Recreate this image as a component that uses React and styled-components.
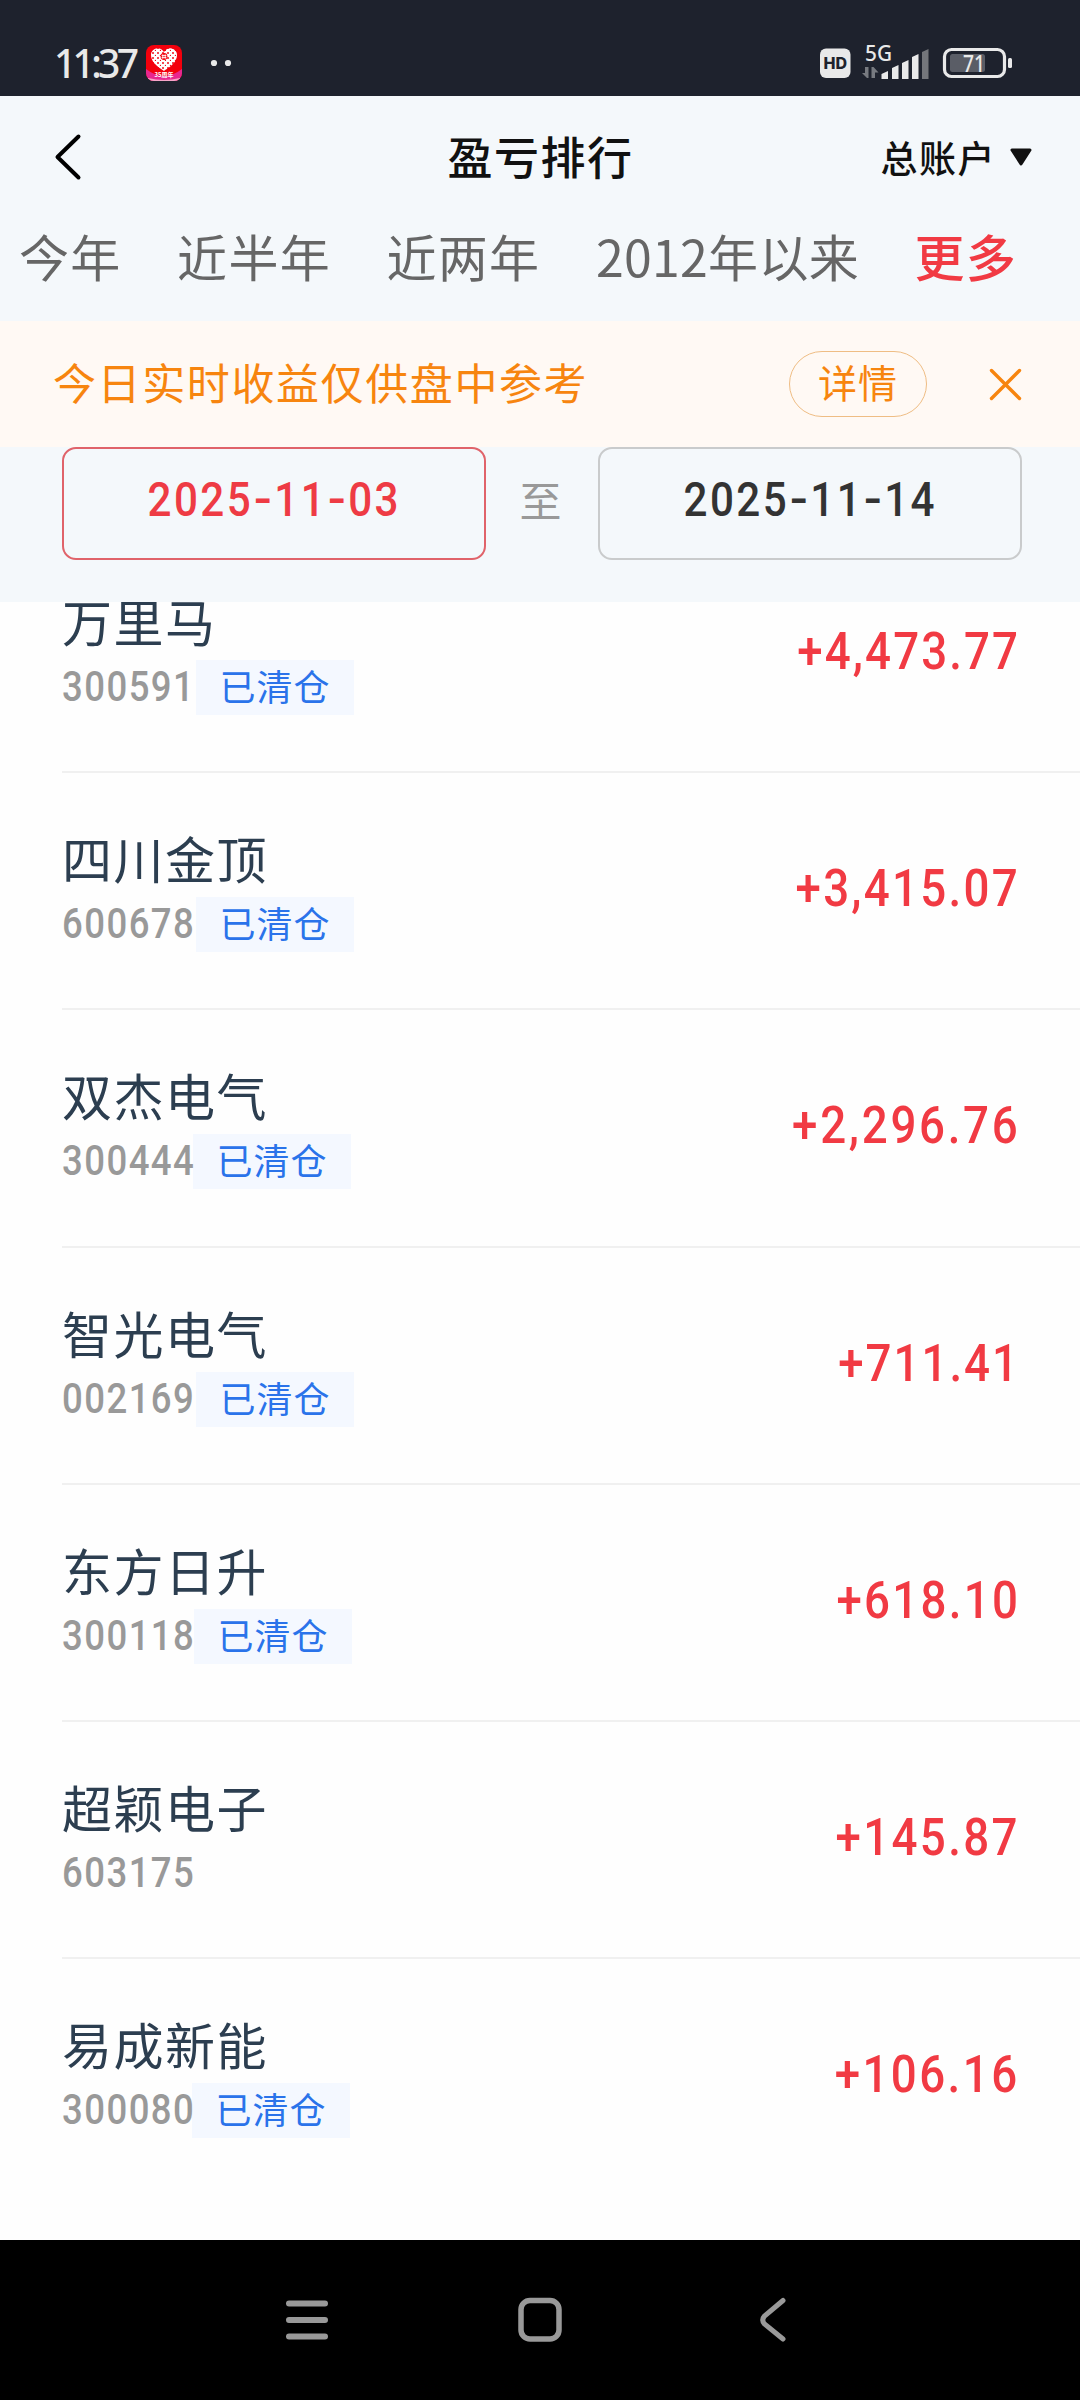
import React from 'react';
import styled, { createGlobalStyle } from 'styled-components';

const GlobalStyle = createGlobalStyle`
  * {
    box-sizing: border-box;
  }
  body {
    margin: 0;
    background-color: #fefefe;
    font-family: 'Noto Sans CJK SC', sans-serif;
  }
`;

const StyledWrapper = styled.div`
  width: 1080px;
  height: 2400px;
  display: flex;
  flex-direction: column;
  overflow: hidden;
  white-space: nowrap;
`;

const StatusBar = styled.div`
  height: 96px;
  flex: none;
  display: flex;
  align-items: flex-start;
  padding: 41px 67px 0 54px;
  background-color: #1e222d;
`;

const Clock = styled.span`
  width: 92px;
  height: 44px;
  font-family: 'Noto Sans', sans-serif;
  font-size: 39px;
  font-weight: 500;
  line-height: 43px;
  letter-spacing: -3.7px;
  color: #e9e9e9;
`;

const StatusIcons = styled.div`
  margin-left: auto;
  height: 44px;
  svg {
    overflow: visible;
  }
`;

const Header = styled.header`
  height: 122px;
  flex: none;
  display: grid;
  grid-template-columns: 1fr auto 1fr;
  align-items: center;
  padding: 0 48px 0 53px;
  background-color: #f4f8fb;
`;

const Title = styled.h1`
  margin: 0 4px 3px 0;
  font-size: 45px;
  font-weight: 500;
  line-height: 60px;
  letter-spacing: 1.5px;
  color: #111;
`;

const AccountPicker = styled.div`
  display: flex;
  align-items: center;
  justify-content: flex-end;
  gap: 14px;
  padding-bottom: 1px;
  font-size: 37px;
  font-weight: 500;
  line-height: 50px;
  letter-spacing: 1.5px;
  color: #111;
`;

const Tabs = styled.nav`
  height: 103px;
  flex: none;
  display: flex;
  gap: 55.5px;
  padding-left: 19px;
  background-color: #f4f8fb;
`;

const Tab = styled.span`
  font-size: 50px;
  line-height: 75px;
  letter-spacing: ${({ $wide }) => ($wide ? '0.3px' : '1.3px')};
  font-weight: ${({ $active }) => ($active ? 500 : 400)};
  color: ${({ $active }) => ($active ? '#f13a43' : '#666')};
`;

const Notice = styled.div`
  height: 126px;
  flex: none;
  display: flex;
  align-items: center;
  padding: 0 58px 0 53px;
  background-color: #fff9f4;
  color: #f7850f;
`;

const NoticeText = styled.span`
  flex: 1;
  padding-bottom: 6px;
  font-size: 43px;
  line-height: 60px;
  letter-spacing: 1.6px;
`;

const DetailButton = styled.div`
  width: 138px;
  height: 66px;
  margin-right: 62px;
  border: 1.5px solid #efbd84;
  border-radius: 33px;
  text-align: center;
  font-size: 39px;
  line-height: 59px;
  letter-spacing: 1px;
`;

const DateRange = styled.div`
  height: 155px;
  flex: none;
  display: flex;
  align-items: flex-start;
  padding: 0 58px 0 62px;
  background-color: #f4f8fb;
`;

const DateBox = styled.div`
  width: 424px;
  height: 113px;
  display: flex;
  justify-content: center;
  border: 2px solid ${({ $active }) => ($active ? '#e0636a' : '#c9cbcc')};
  border-radius: 14px;
  color: ${({ $active }) => ($active ? '#ee3b44' : '#333')};
`;

const Figures = styled.span`
  font-family: Roboto, sans-serif;
  font-weight: 500;
  font-size: 49px;
  line-height: 99px;
  letter-spacing: 2.8px;
  transform: scaleX(0.86);
`;

const Dash = styled.span`
  font-family: Inter, sans-serif;
  letter-spacing: 2px;
`;

const RangeLabel = styled.span`
  flex: 1;
  padding-right: 3px;
  text-align: center;
  font-size: 42px;
  line-height: 104px;
  color: #999;
`;

const List = styled.main`
  flex: 1;
  min-height: 0;
  display: flex;
  flex-direction: column;
  overflow: hidden;
  background-color: #fefefe;
`;

// the first row is scrolled partly under the date range
const Row = styled.div`
  height: 237.2px;
  flex: none;
  display: flex;
  justify-content: space-between;
  margin-left: 62px;
  padding-right: 60px;
  border-bottom: ${({ $last }) => ($last ? 'none' : '2px solid #f0f0f0')};
  &:first-child {
    margin-top: -66px;
  }
`;

const Stock = styled.div`
  display: flex;
  flex-direction: column;
  padding-top: 48px;
`;

const StockName = styled.span`
  height: 76px;
  font-size: 50px;
  line-height: 72px;
  letter-spacing: 1.5px;
  color: #2c3e50;
`;

const StockMeta = styled.div`
  height: 55px;
  display: flex;
`;

const Code = styled.span`
  width: ${({ $width }) => $width}px;
  font-family: Roboto, sans-serif;
  font-size: 43px;
  font-weight: 500;
  line-height: 53px;
  letter-spacing: 1.7px;
  color: #999;
  transform: scaleX(0.85);
  transform-origin: left;
`;

const Tag = styled.span`
  width: 158px;
  height: 55px;
  background-color: #f4f8ff;
  color: #2a73ea;
  font-size: 36px;
  line-height: 51px;
  letter-spacing: 1px;
  text-align: center;
`;

const Amount = styled.span`
  font-family: Roboto, sans-serif;
  font-weight: 500;
  font-size: 52.5px;
  line-height: 231px;
  letter-spacing: ${({ $tracking }) => $tracking}px;
  color: #f13a43;
  transform: scaleX(0.87);
  transform-origin: right;
`;

const NavBar = styled.footer`
  height: 160px;
  flex: none;
  display: flex;
  align-items: center;
  justify-content: space-between;
  padding: 0 292px 0 285px;
  background-color: #000;
`;

const HomeButton = styled.div`
  height: 46px;
  margin-right: 9px;
`;

const AppIcon = () => (
  <svg width="36" height="44" viewBox="0 0 36 44">
    <defs>
      <clipPath id="badge">
        <rect y="4" width="36" height="36" rx="8" />
      </clipPath>
      <pattern id="speckle" width="5" height="5" patternUnits="userSpaceOnUse">
        <rect width="5" height="5" fill="#fff" />
        <circle cx="2" cy="2" r="1" fill="#f0101c" />
        <circle cx="4.5" cy="4.5" r="0.7" fill="#f0101c" />
      </pattern>
    </defs>
    <g clipPath="url(#badge)">
      <rect y="4" width="36" height="36" fill="#f3000c" />
      <path d="M0 28Q18 42 36 28V40H0Z" fill="#e8278f" />
      <path d="M2 37Q18 41 34 37L36 40H0Z" fill="#f6a5c8" />
      <path
        d="M18 30C10 25 5 20 5 14C5 8 13 4 18 11C23 4 31 8 31 14C31 20 26 25 18 30Z"
        fill="url(#speckle)"
      />
      <circle cx="18" cy="15.5" r="3.4" fill="#f3000c" />
      <path d="M16.8 13.4V17.8M19.2 13.4V17.8M15.6 14.6H20.4M15.6 16.6H20.4" stroke="#fff" strokeWidth="0.9" />
    </g>
    <text x="18" y="36" fontSize="6" fontWeight="700" fill="#fff" textAnchor="middle">
      35周年
    </text>
  </svg>
);

const MoreDots = () => (
  <svg width="60" height="44" viewBox="0 0 60 44">
    <circle cx="32" cy="22" r="3.1" fill="#e9e9e9" />
    <circle cx="46" cy="22" r="3.1" fill="#e9e9e9" />
  </svg>
);

const Indicators = () => (
  <svg width="193" height="44" viewBox="820 41 193 44" fill="#e9e9e9">
    <rect x="820" y="48.5" width="30.5" height="29.5" rx="6" />
    <text x="835.2" y="69" fontFamily="Inter" fontSize="16" fontWeight="800" fill="#1e222d" textAnchor="middle">
      HD
    </text>
    <text x="865" y="61" fontFamily="Noto Sans" fontSize="21" fontWeight="500" textLength="27" lengthAdjust="spacingAndGlyphs">
      5G
    </text>
    <path d="M862 73H865V67H868.5V78H867ZM871.5 67H873.5L878.5 72.5H875V78H871.5Z" fill="#777a80" />
    <path d="M881.5 79V74L888 71V79ZM892 79V68L898.5 65V79ZM902 79V63L908.5 60V79ZM912 79V57L918.5 54V79Z" />
    <path d="M922 79V52L928.5 49V79Z" fill="#74767b" />
    <rect x="944.5" y="49.5" width="60" height="27" rx="7" fill="none" stroke="#e9e9e9" strokeWidth="3.2" />
    <rect x="950" y="54" width="35" height="18" rx="2.5" fill="#5a5d66" />
    <rect x="1008" y="58" width="4" height="10" rx="1.5" />
    <text x="963" y="72" fontFamily="Noto Sans" fontSize="24" fontWeight="500" textLength="22" lengthAdjust="spacingAndGlyphs">
      71
    </text>
  </svg>
);

const BackIcon = () => (
  <svg width="30" height="48" viewBox="0 0 30 48" fill="none">
    <path d="M25.5 3.5L4.5 24L25.5 44.5" stroke="#000" strokeWidth="4" strokeLinecap="round" strokeLinejoin="round" />
  </svg>
);

const CaretIcon = () => (
  <svg width="22" height="18" viewBox="0 0 22 18">
    <path d="M2 2H20L11 16Z" fill="#111" stroke="#111" strokeWidth="3" strokeLinejoin="round" />
  </svg>
);

const CloseIcon = () => (
  <svg width="33" height="33" viewBox="0 0 33 33">
    <path d="M2.5 2.5L30.5 30.5M30.5 2.5L2.5 30.5" stroke="#f7850f" strokeWidth="3.4" strokeLinecap="round" />
  </svg>
);

const MenuIcon = () => (
  <svg width="44" height="46" viewBox="0 0 44 46">
    <path d="M4 6.5H40M4 23H40M4 39.5H40" stroke="#999" strokeWidth="6" strokeLinecap="round" />
  </svg>
);

const HomeIcon = () => (
  <svg width="44" height="46" viewBox="0 0 44 46">
    <rect x="3" y="3.5" width="38" height="38.5" rx="9" fill="none" stroke="#999" strokeWidth="5.5" />
  </svg>
);

const ReturnIcon = () => (
  <svg width="29" height="46" viewBox="0 0 29 46">
    <path d="M24 3.5L5.5 19Q2 23 5.5 27L24 42" fill="none" stroke="#999" strokeWidth="5" strokeLinecap="round" />
  </svg>
);

const stocks = [
  { name: '万里马', code: '300591', amount: '+4,473.77', closed: true, codeWidth: 134, tracking: 2.4 },
  { name: '四川金顶', code: '600678', amount: '+3,415.07', closed: true, codeWidth: 134, tracking: 2.6 },
  { name: '双杰电气', code: '300444', amount: '+2,296.76', closed: true, codeWidth: 131, tracking: 3.1 },
  { name: '智光电气', code: '002169', amount: '+711.41', closed: true, codeWidth: 134, tracking: 2.3 },
  { name: '东方日升', code: '300118', amount: '+618.10', closed: true, codeWidth: 132, tracking: 2.6 },
  { name: '超颖电子', code: '603175', amount: '+145.87', closed: false, codeWidth: 134, tracking: 2.7 },
  { name: '易成新能', code: '300080', amount: '+106.16', closed: true, codeWidth: 130, tracking: 2.8 },
];

const tabs = ['今年', '近半年', '近两年', '2012年以来', '更多'];

const DateText = ({ value }) => {
  const [year, month, day] = value.split('-');
  return (
    <Figures>
      {year}
      <Dash>-</Dash>
      {month}
      <Dash>-</Dash>
      {day}
    </Figures>
  );
};

const App = () => (
  <StyledWrapper>
    <GlobalStyle />
    <StatusBar>
      <Clock>11:37</Clock>
      <AppIcon />
      <MoreDots />
      <StatusIcons>
        <Indicators />
      </StatusIcons>
    </StatusBar>
    <Header>
      <BackIcon />
      <Title>盈亏排行</Title>
      <AccountPicker>
        总账户
        <CaretIcon />
      </AccountPicker>
    </Header>
    <Tabs>
      {tabs.map((tab) => (
        <Tab key={tab} $active={tab === '更多'} $wide={tab.length > 3}>
          {tab}
        </Tab>
      ))}
    </Tabs>
    <Notice>
      <NoticeText>今日实时收益仅供盘中参考</NoticeText>
      <DetailButton>详情</DetailButton>
      <CloseIcon />
    </Notice>
    <DateRange>
      <DateBox $active>
        <DateText value="2025-11-03" />
      </DateBox>
      <RangeLabel>至</RangeLabel>
      <DateBox>
        <DateText value="2025-11-14" />
      </DateBox>
    </DateRange>
    <List>
      {stocks.map((stock, index) => (
        <Row key={stock.code} $last={index === stocks.length - 1}>
          <Stock>
            <StockName>{stock.name}</StockName>
            <StockMeta>
              <Code $width={stock.codeWidth}>{stock.code}</Code>
              {stock.closed && <Tag>已清仓</Tag>}
            </StockMeta>
          </Stock>
          <Amount $tracking={stock.tracking}>{stock.amount}</Amount>
        </Row>
      ))}
    </List>
    <NavBar>
      <MenuIcon />
      <HomeButton>
        <HomeIcon />
      </HomeButton>
      <ReturnIcon />
    </NavBar>
  </StyledWrapper>
);

export default App;
